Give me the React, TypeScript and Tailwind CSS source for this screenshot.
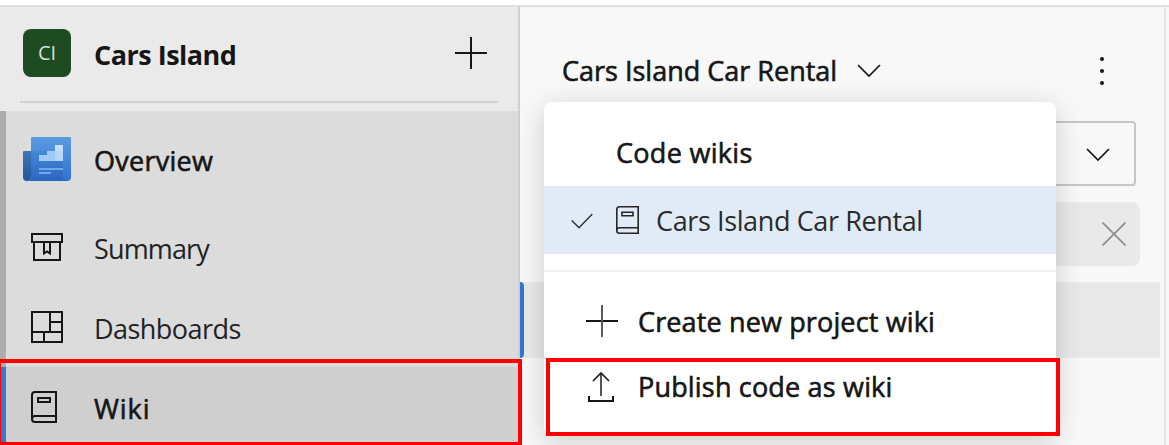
import type { ReactNode } from "react";

function Svg({ w, h, className = "", children }: { w: number; h: number; className?: string; children: ReactNode }) {
  return (
    <svg
      width={w}
      height={h}
      viewBox={`0 0 ${w} ${h}`}
      fill="none"
      stroke="#161616"
      strokeWidth="2"
      className={`block shrink-0 ${className}`}
    >
      {children}
    </svg>
  );
}

function Plus({ className = "" }: { className?: string }) {
  return (
    <Svg w={32} h={32} className={className}>
      <path d="M0 16H32M16 0V32" />
    </Svg>
  );
}

function Chevron({ className = "" }: { className?: string }) {
  return (
    <Svg w={24} h={14} className={className}>
      <path d="M1 1L12 12L23 1" strokeWidth="1.7" />
    </Svg>
  );
}

function OverviewIcon() {
  return (
    <svg width="48" height="44" viewBox="0 0 48 44" className="mb-1 block shrink-0">
      <defs>
        <linearGradient id="sheet" x1="0" y1="0" x2="0" y2="1">
          <stop offset="0" stopColor="#5a9ade" />
          <stop offset="1" stopColor="#2f74d0" />
        </linearGradient>
        <linearGradient id="front" x1="0" y1="0" x2="0" y2="1">
          <stop offset="0" stopColor="#4488d6" />
          <stop offset="1" stopColor="#2b66c2" />
        </linearGradient>
        <linearGradient id="fold" x1="0" y1="0" x2="0" y2="1">
          <stop offset="0" stopColor="#4174b4" />
          <stop offset="1" stopColor="#24559f" />
        </linearGradient>
      </defs>
      <path d="M9 0H47Q48 0 48 1V40Q48 44 44 44H8V1Q8 0 9 0Z" fill="url(#sheet)" />
      <path d="M8 14H40V40Q40 44 44 44H4Q8 44 8 40Z" fill="url(#front)" />
      <path d="M1 14H8V40Q8 44 4 44Q0 44 0 40V15Q0 14 1 14Z" fill="url(#fold)" />
      <path d="M16 18H24V14H32V24H16Z" fill="#9fcaf6" />
      <path d="M32 8H40V24H32Z" fill="#b5d8fa" />
      <path d="M32 8H40V14H32Z" fill="#c5e0fa" />
      <path d="M16 31H40V33H16ZM16 35H28V37H16Z" fill="#6fa9ec" />
    </svg>
  );
}

function SummaryIcon() {
  return (
    <Svg w={32} h={28} className="mb-1">
      <path d="M1 1H31V9H1ZM3 9V27H29V9M13 9V20.5L16 18.5L19 20.5V9" />
    </Svg>
  );
}

function DashboardsIcon() {
  return (
    <Svg w={32} h={32} className="mb-1">
      <path d="M1 1H31V31H1ZM1 21H31M19 1V21M19 11H31M13 21V31" />
    </Svg>
  );
}

function WikiIcon() {
  return (
    <Svg w={26} h={32}>
      <path d="M25 1V31H4Q1 31 1 28V4Q1 1 4 1ZM1 28Q1 25 4 25H25M7 7H19V11H7Z" />
    </Svg>
  );
}

function Sidebar() {
  return (
    <aside className="flex h-[438px] w-[520px] shrink-0 flex-col border-r-2 border-[#d0d0d0] bg-[#eaeaea]">
      <header className="flex h-[94px] shrink-0 items-start pl-[23px] pt-[22px]">
        <div className="flex size-12 items-center justify-center rounded-lg bg-[#1f4b22] text-[20px] leading-none text-[#d5ded5]">
          CI
        </div>
        <div className="ml-[23px] mt-[6px] w-[361px] text-[27px] font-bold leading-[40px] tracking-[-0.5px]">
          Cars Island
        </div>
        <Plus className="mt-2" />
      </header>
      <div className="ml-5 h-[2px] w-[478px] shrink-0 bg-[#d0d0d0]" />
      <nav className="mt-2 flex grow flex-col bg-[#dcdcdc]">
        <div className="flex h-[256px] flex-col border-l-[6px] border-[#adadad] pl-[17px]">
          <div className="flex h-[100px] items-center">
            <OverviewIcon />
            <span className="ml-[23px] text-[27px] tracking-[0.25px] [-webkit-text-stroke:0.6px_#161616]">Overview</span>
          </div>
          <div className="flex h-[76px] items-center pl-2">
            <SummaryIcon />
            <span className="ml-[31px] text-[27px] tracking-[-0.85px] text-[#222]">Summary</span>
          </div>
          <div className="flex h-20 items-center pl-2 pt-1">
            <DashboardsIcon />
            <span className="ml-[31px] text-[27px] tracking-[-0.55px] text-[#222]">Dashboards</span>
          </div>
        </div>
        <div className="flex grow items-center rounded-r border-l-[6px] border-[#3277d0] bg-[#cfcfcf] pl-[25px] pt-[2px]">
          <WikiIcon />
          <span className="ml-[37px] pt-1 text-[27px] tracking-[0.9px] [-webkit-text-stroke:0.6px_#161616]">Wiki</span>
        </div>
      </nav>
    </aside>
  );
}

function Content() {
  return (
    <main className="flex h-[438px] w-[646px] shrink-0 flex-col border-r-2 border-[#e4e4e4]">
      <header className="flex h-[114px] shrink-0 items-start pl-[42px] pt-[44px]">
        <div className="w-[295px] text-[27px] leading-[40px] [-webkit-text-stroke:0.6px_#161616]">
          Cars Island Car Rental
        </div>
        <Chevron className="mt-[13px]" />
        <svg width="4" height="28" viewBox="0 0 4 28" className="ml-[219px] mt-[6px]">
          <g fill="#161616">
            <circle cx="2" cy="2" r="2" />
            <circle cx="2" cy="14" r="2" />
            <circle cx="2" cy="26" r="2" />
          </g>
        </svg>
      </header>
      <div className="ml-[42px] flex h-[65px] w-[574px] shrink-0 items-center justify-end rounded border-2 border-[#c6c6c6] pr-6">
        <Chevron className="mt-[2px]" />
      </div>
      <div className="ml-[42px] mt-4 flex h-16 w-[578px] shrink-0 items-center justify-end rounded-lg bg-[#e9e9e9] pr-[14px]">
        <Svg w={24} h={24}>
          <path d="M0.5 0.5L23.5 23.5M23.5 0.5L0.5 23.5" stroke="#8c8c8c" strokeWidth="1.7" />
        </Svg>
      </div>
      <div className="mt-4 flex h-[76px] w-[640px] shrink-0 bg-[#e9e9e9]">
        <div className="w-1 rounded-r-sm bg-[#3277d0]" />
      </div>
    </main>
  );
}

function WikiMenu() {
  return (
    <div className="absolute left-[544px] top-[102px] flex h-[333px] w-[512px] flex-col rounded-lg bg-white shadow-[0_6px_28px_rgba(0,0,0,0.18)]">
      <div className="flex h-[84px] shrink-0 items-center pl-[72px] pt-[18px] text-[27px] tracking-[0.3px] [-webkit-text-stroke:0.6px_#161616]">
        Code wikis
      </div>
      <div className="flex h-[68px] shrink-0 items-center bg-[#e1ebf7] pl-[27px]">
        <Svg w={22} h={16} className="mt-[1px]">
          <path d="M0.7 7.5L8 14.7L21.3 1" stroke="#333" strokeWidth="1.5" />
        </Svg>
        <Svg w={23} h={28} className="ml-[23px]">
          <path
            d="M22.2 0.8V27.2H3.5Q0.8 27.2 0.8 24.5V3.5Q0.8 0.8 3.5 0.8ZM0.8 24.5Q0.8 21.8 3.5 21.8H22.2M6 6.3H17V9.7H6Z"
            strokeWidth="1.6"
            stroke="#252525"
          />
        </Svg>
        <span className="ml-[17px] pt-[2px] text-[27px] tracking-[-0.38px] text-[#2a2a2a]">Cars Island Car Rental</span>
      </div>
      <div className="mt-4 h-[2px] shrink-0 bg-[#f0f0f0]" />
      <div className="flex h-[98px] shrink-0 items-center pl-[42px] text-[27px] tracking-[0.14px] [-webkit-text-stroke:0.6px_#161616]">
        <Svg w={32} h={32}>
          <path d="M0 16H32" />
          <path d="M16 0V32" stroke="#5a5a5a" />
        </Svg>
        <span className="ml-5 pt-[2px]">Create new project wiki</span>
      </div>
      <div className="flex h-[33px] items-center pl-11 text-[27px] tracking-[0.18px] [-webkit-text-stroke:0.6px_#161616]">
        <Svg w={26} h={30}>
          <path d="M1 24V29H25V24" />
          <path d="M13 1V24" stroke="#555" />
          <path d="M5 9L13 1L21 9" strokeWidth="1.6" />
        </Svg>
        <span className="ml-6 leading-[34px]">Publish code as wiki</span>
      </div>
    </div>
  );
}

export default function App() {
  return (
    <div className="relative h-[445px] w-[1169px] overflow-hidden whitespace-nowrap bg-white pt-[5px] font-['Open_Sans','Noto_Sans',sans-serif] text-[#161616]">
      <div className="flex h-[440px] border-t-2 border-[#dfdfdf] bg-[#f8f8f8]">
        <Sidebar />
        <Content />
      </div>
      <WikiMenu />
      <div className="absolute left-[-3px] top-[359px] h-[87px] w-[525px] border-4 border-[#ff0000]" />
      <div className="absolute left-[546px] top-[358px] h-[78px] w-[514px] border-4 border-[#ff0000]" />
    </div>
  );
}
